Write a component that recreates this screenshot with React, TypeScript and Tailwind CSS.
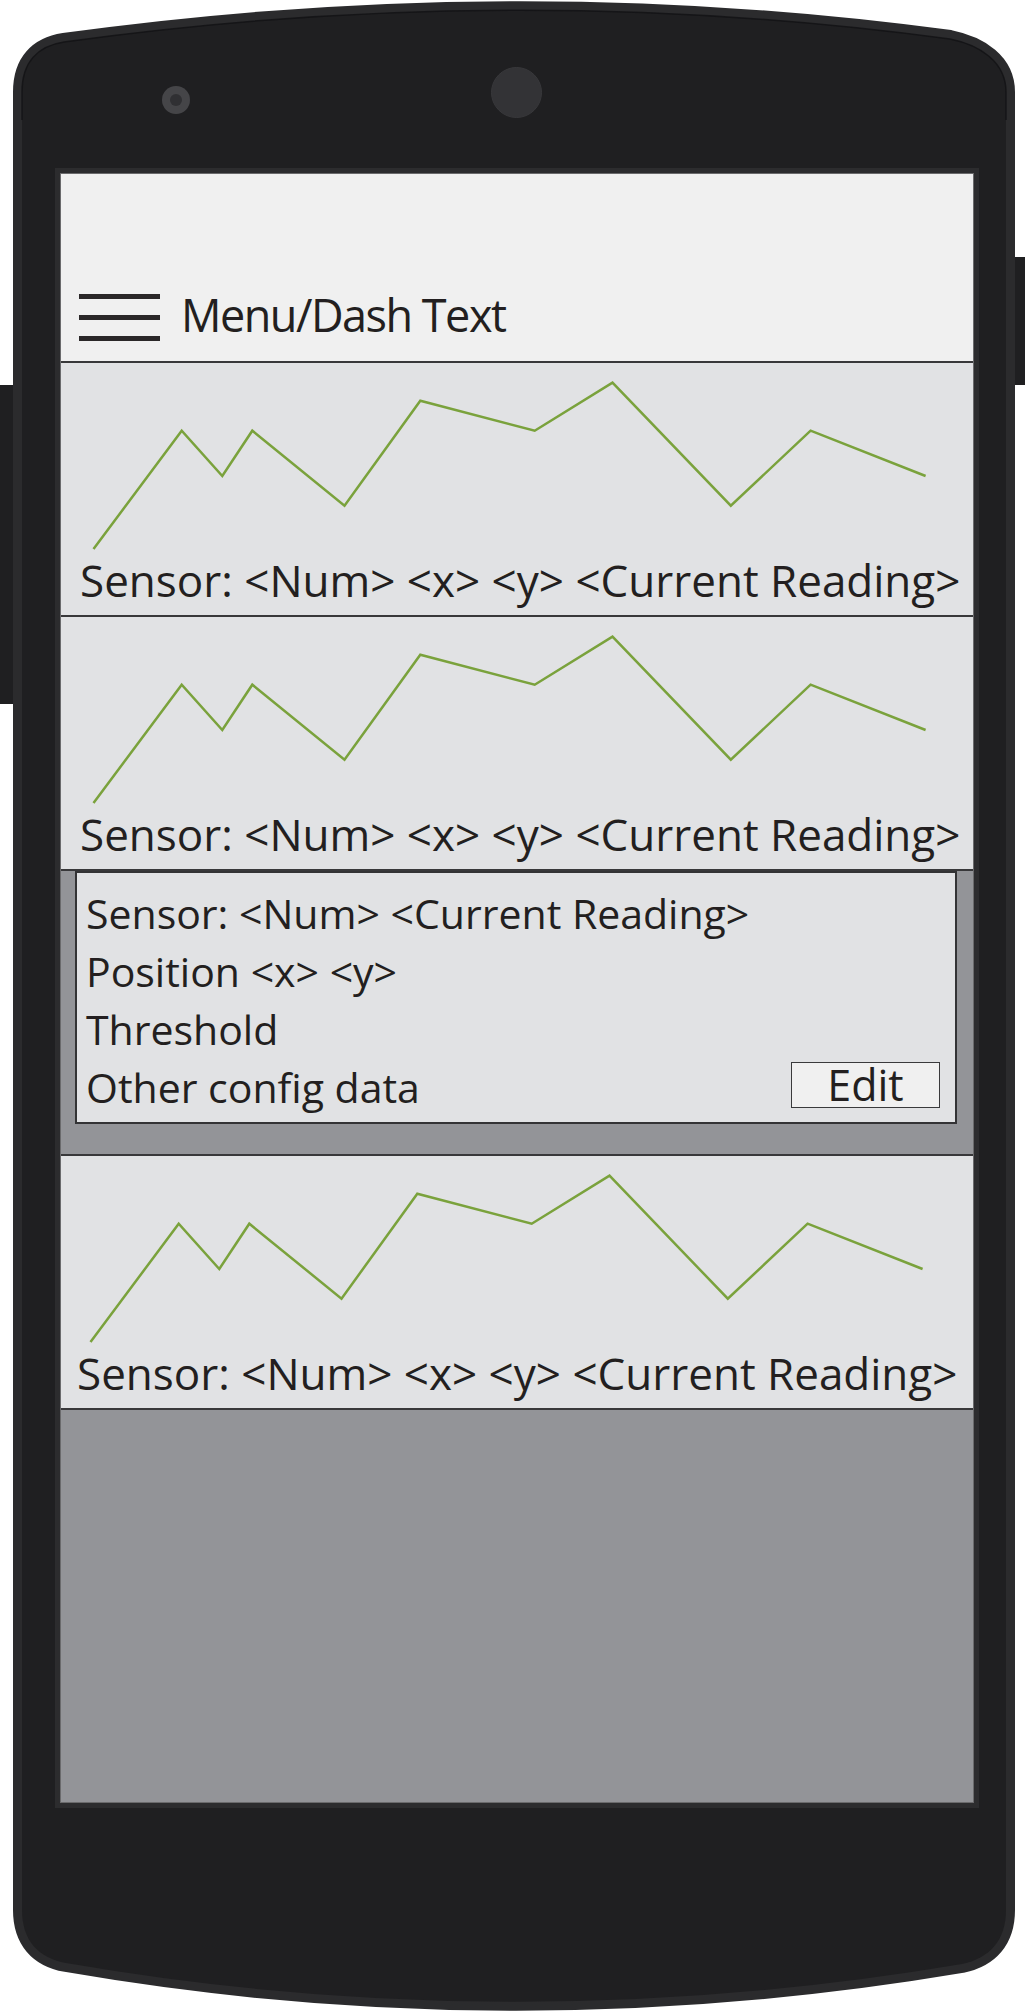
import React from "react";

const FONT = "font-['Open_Sans',sans-serif]";

const POINTS =
  "32.5,186 120.7,67.7 161.3,113 191.3,67.7 283.5,142.7 359.3,37.7 473.7,67.7 551.5,19.7 669.8,142.7 749.6,67.7 864.6,113";

const PHONE_PATH =
  "M 9,92 C 9,62 25,46 51,42 Q 499,-20 937,39 C 967,45 993,62 993,92 L 993,1910 C 993,1940 977,1958 949,1964 Q 499,2040 53,1963 C 25,1958 9,1940 9,1910 Z";

const SensorCard = ({ shifted, topBorder }: { shifted?: boolean; topBorder?: boolean }) => {
  return (
    <div
      className={`${topBorder ? "h-[256px] border-t-2" : "h-[254px]"} border-b-2 border-[#38383a] bg-[#e1e2e4] shrink-0`}
    >
      <div className={shifted ? "-ml-[3px]" : ""}>
        <svg width="912" height="195" viewBox="0 0 912 195" className="block">
          <polyline
            points={POINTS}
            fill="none"
            stroke="#7aa23c"
            strokeWidth="2.5"
            strokeLinejoin="miter"
          />
        </svg>
        <div className="pl-[19px] text-[44px] leading-[44px] text-[#231f20] whitespace-nowrap">
          Sensor: &lt;Num&gt; &lt;x&gt; &lt;y&gt; &lt;Current Reading&gt;
        </div>
      </div>
    </div>
  );
};

const ConfigPanel = () => {
  return (
    <div className="h-[283px] shrink-0 bg-[#939498] pl-[14px] pr-[16px]">
      <div className="h-[253px] border-2 border-[#333335] bg-[#e1e2e4] pt-[11px] pl-[9px] text-[41px] leading-[58px] text-[#231f20]">
        <div className="whitespace-nowrap">Sensor: &lt;Num&gt; &lt;Current Reading&gt;</div>
        <div className="whitespace-nowrap">Position &lt;x&gt; &lt;y&gt;</div>
        <div>Threshold</div>
        <div className="flex items-start justify-between">
          <span className="whitespace-nowrap">Other config data</span>
          <button className="mt-[4px] mr-[15px] h-[46px] w-[149px] border border-[#3a3a3c] bg-[#f0f0f0] text-center text-[43px] leading-[34px] text-[#231f20]">
            Edit
          </button>
        </div>
      </div>
    </div>
  );
};

const Header = () => {
  return (
    <div className="h-[189px] shrink-0 flex flex-col justify-end border-b-2 border-[#38383a] bg-[#f0f0f0] pl-[18px] pb-[20px]">
      <div className="flex items-start gap-[21px]">
        <div className="pt-[3px] flex flex-col gap-[16px]">
          <div className="h-[5px] w-[81px] bg-[#2a2728]" />
          <div className="h-[5px] w-[81px] bg-[#2a2728]" />
          <div className="h-[5px] w-[81px] bg-[#2a2728]" />
        </div>
        <span className="text-[45px] leading-[48px] tracking-[-1.5px] text-[#231f20]">
          Menu/Dash Text
        </span>
      </div>
    </div>
  );
};

export default function App() {
  return (
    <div className={`${FONT} w-[1025px] h-[2013px] bg-white flex overflow-hidden`}>
      {/* left side button */}
      <div className="w-[13px] shrink-0 pt-[385px]">
        <div className="h-[319px] w-[13px] bg-[#1f1f21]" />
      </div>

      {/* phone */}
      <div className="relative w-[1002px] h-[2013px] shrink-0">
        <svg
          width="1002"
          height="2013"
          viewBox="0 0 1002 2013"
          className="absolute inset-0"
        >
          <path
            d={PHONE_PATH}
            fill="#1f1f21"
            stroke="#2b2b2d"
            strokeWidth="18"
            style={{ paintOrder: "stroke" }}
          />
          <path
            d="M 9,120 L 9,92 C 9,62 25,46 51,42 Q 499,-20 937,39 C 967,45 993,62 993,92 L 993,120"
            fill="none"
            stroke="#121214"
            strokeWidth="1.5"
            opacity="0.8"
          />
        </svg>

        <div className="relative flex flex-col">
          {/* camera row */}
          <div className="flex items-start pt-[67px] pl-[149px] h-[118px]">
            <div className="mt-[19px] h-[28px] w-[28px] rounded-full bg-[#454548] flex items-center justify-center">
              <div className="h-[12px] w-[12px] rounded-full bg-[#303033]" />
            </div>
            <div className="ml-[301px] h-[51px] w-[51px] rounded-full bg-[#333336] border border-[#38383b]" />
          </div>

          {/* bezel */}
          <div className="mt-[50px] ml-[42px] w-[924px] h-[1640px] bg-[#2c2c2e] p-[6px]">
            <div className="h-[1628px] w-[912px] flex flex-col bg-[#939498] shadow-[0_0_0_1px_#6a6a6c]">
              <Header />
              <SensorCard />
              <SensorCard />
              <ConfigPanel />
              <SensorCard shifted topBorder />
              <div className="flex-1 bg-[#939498]" />
            </div>
          </div>
        </div>
      </div>

      {/* right side button */}
      <div className="w-[10px] shrink-0 pt-[257px]">
        <div className="h-[128px] w-[10px] bg-[#1f1f21]" />
      </div>
    </div>
  );
}
